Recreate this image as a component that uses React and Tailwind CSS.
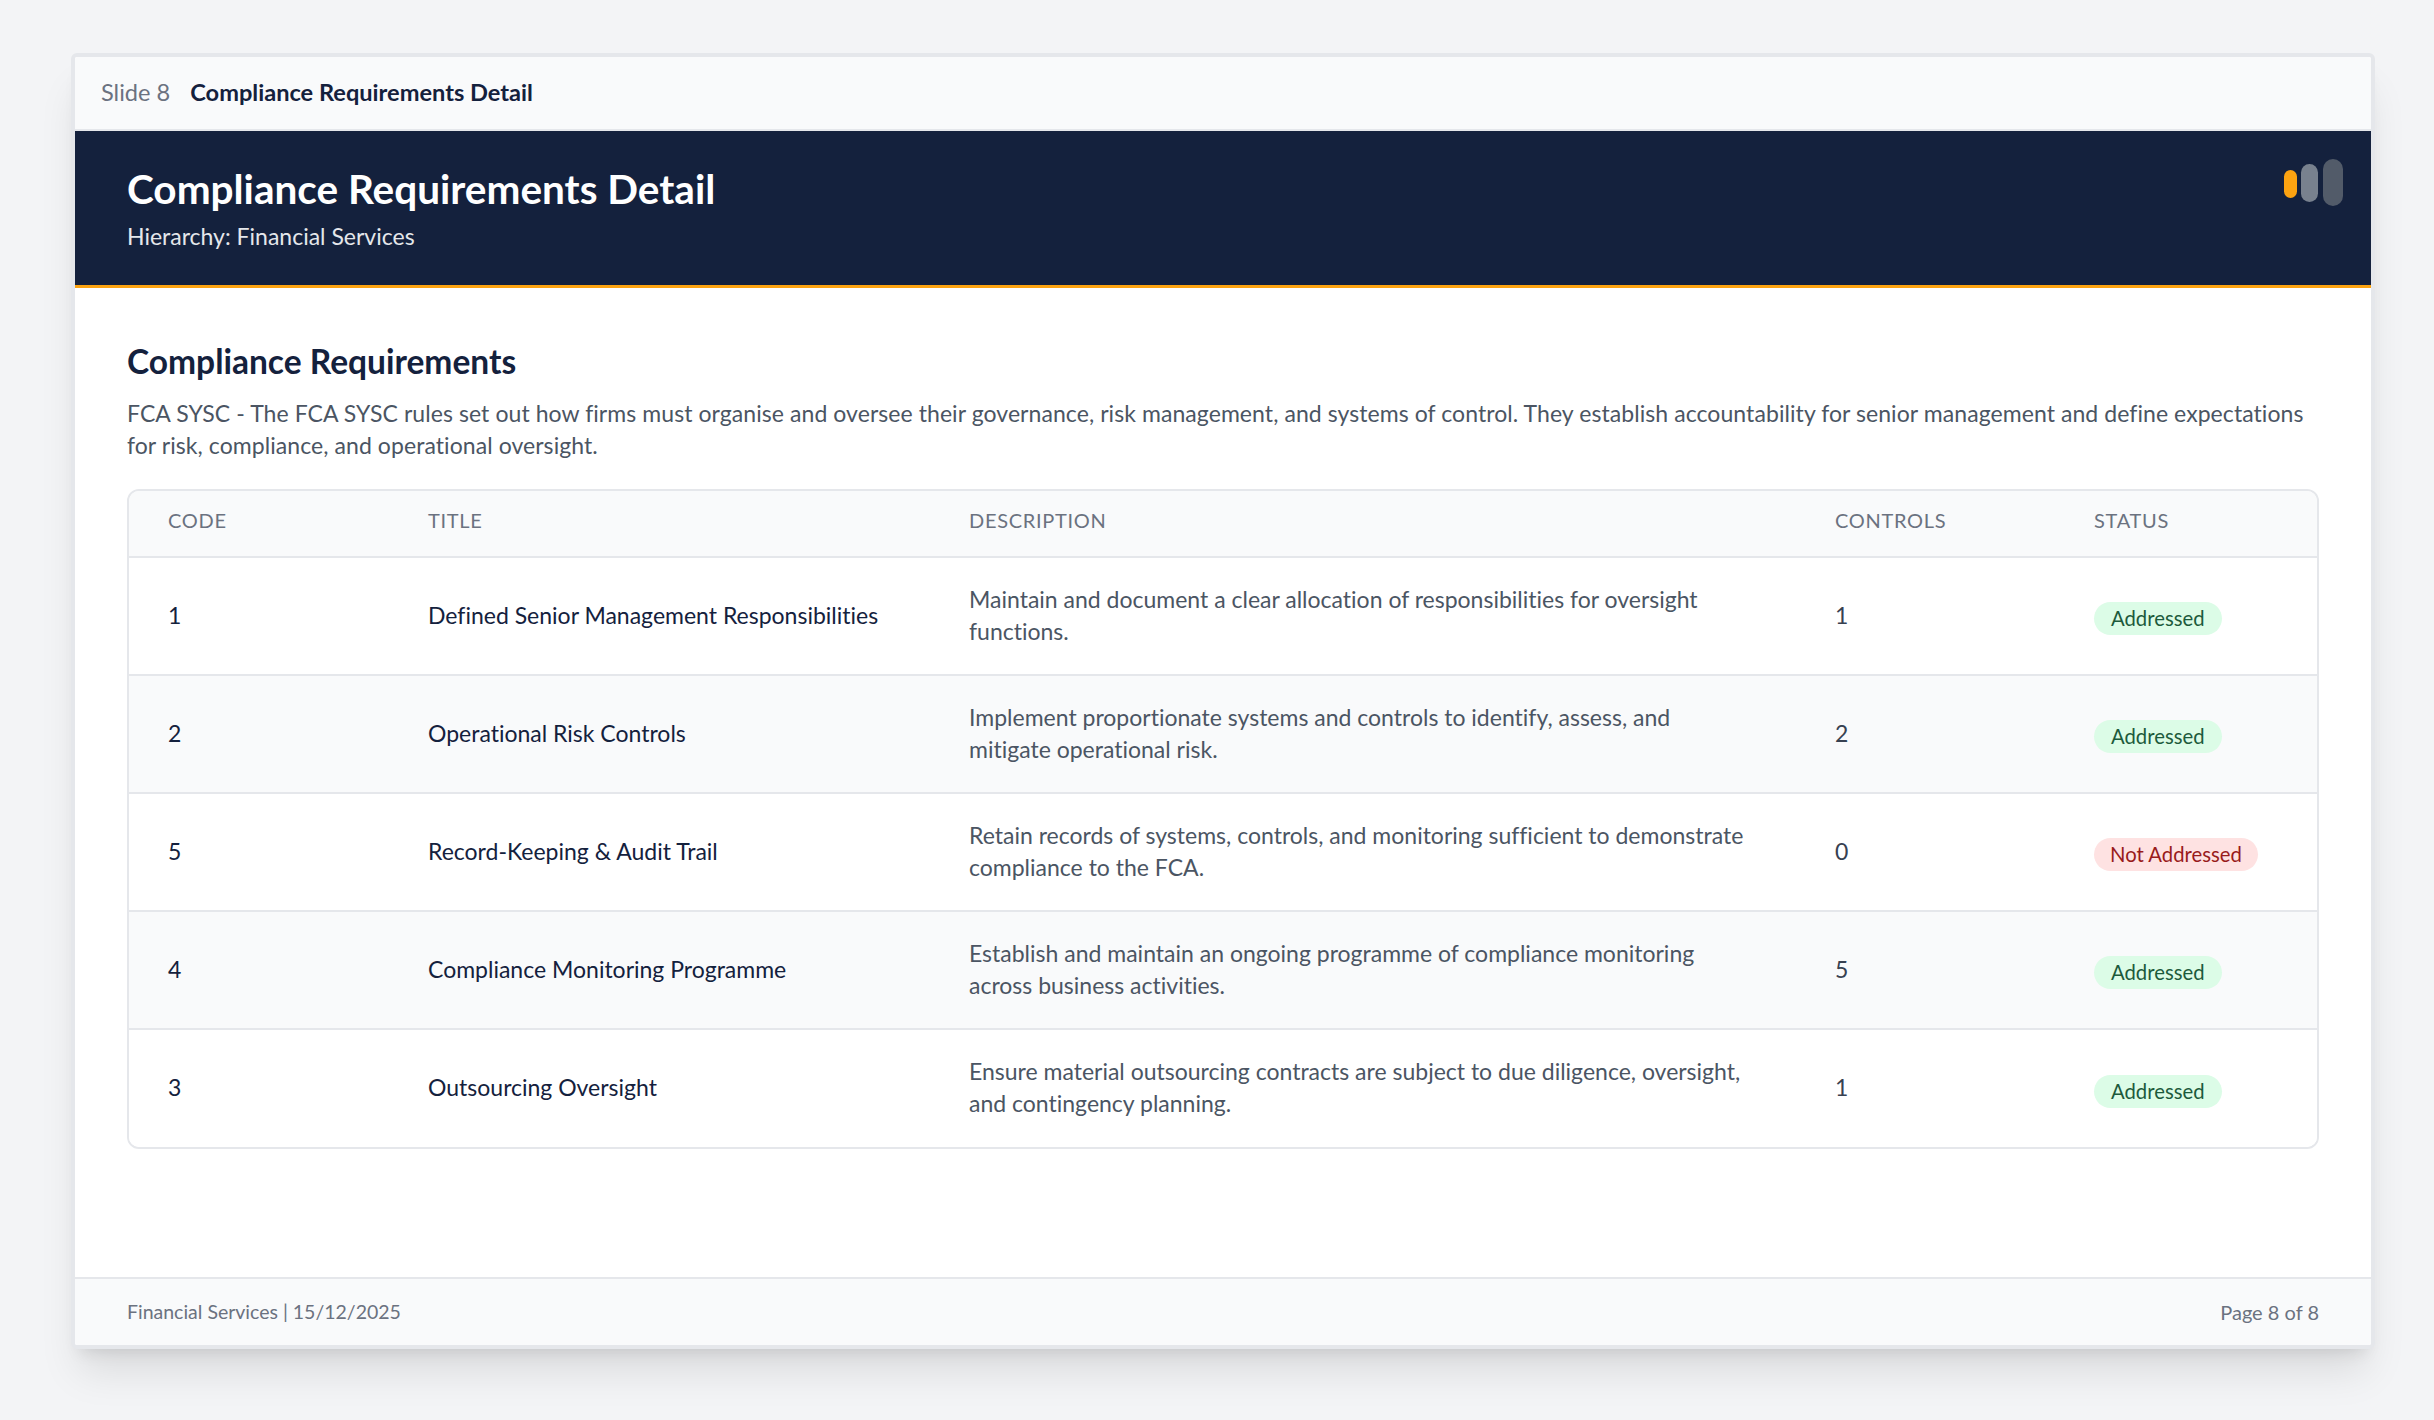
const rows = [
    { code: '1', title: 'Defined Senior Management Responsibilities', desc: 'Maintain and document a clear allocation of responsibilities for oversight functions.', controls: 1, ok: true },
    { code: '2', title: 'Operational Risk Controls', desc: 'Implement proportionate systems and controls to identify, assess, and mitigate operational risk.', controls: 2, ok: true },
    { code: '5', title: 'Record-Keeping & Audit Trail', desc: 'Retain records of systems, controls, and monitoring sufficient to demonstrate compliance to the FCA.', controls: 0, ok: false },
    { code: '4', title: 'Compliance Monitoring Programme', desc: 'Establish and maintain an ongoing programme of compliance monitoring across business activities.', controls: 5, ok: true },
    { code: '3', title: 'Outsourcing Oversight', desc: 'Ensure material outsourcing contracts are subject to due diligence, oversight, and contingency planning.', controls: 1, ok: true },
];

function Badge({ ok }) {
    return ok
        ? <span className="inline-block rounded-full bg-[#dcfce7] px-[17px] py-[3px] text-[20.3px] leading-[27px] text-[#1c5a3c]">Addressed</span>
        : <span className="inline-block rounded-full bg-[#fee2e2] px-[16px] py-[3px] text-[20.3px] leading-[27px] text-[#991b1b]">Not Addressed</span>;
}

export default function App() {
    return (
        <div className="min-h-[1420px] bg-[#f3f4f6] pl-[71px] pt-[53px] font-['Lato','Liberation_Sans',sans-serif] [font-variant-ligatures:none]">
            <div className="flex h-[1296px] w-[2304px] flex-col overflow-hidden rounded-[6px] border-4 border-[#e5e7eb] bg-white shadow-[0_30px_38px_-8px_rgba(0,0,0,0.1),0_12px_15px_-9px_rgba(0,0,0,0.1)]">
                <div className="flex h-[74px] shrink-0 items-center gap-[20px] border-b-2 border-[#e5e7eb] bg-[#f9fafb] px-[26px] text-[23.6px]">
                    <span className="text-[#6b7280]">Slide 8</span>
                    <span className="font-bold text-[#14213d]">Compliance Requirements Detail</span>
                </div>
                <header className="relative flex h-[157px] shrink-0 flex-col justify-center border-b-[3px] border-[#fca311] bg-[#14213d] px-[52px] text-white">
                    <h1 className="text-[40.5px] font-bold leading-[54px]">Compliance Requirements Detail</h1>
                    <p className="mt-[3px] pb-[1px] text-[23px] leading-[34px] text-[#e5e7eb]">Hierarchy: Financial Services</p>
                    <div className="absolute right-[28px] top-[28px] flex items-center gap-[4px]">
                        <div className="mt-[3px] h-[28px] w-[13px] rounded-full bg-[#fca311]" />
                        <div className="h-[38px] w-[17px] rounded-full bg-[#78818e]" />
                        <div className="ml-px h-[47px] w-[20px] rounded-full bg-[#525b69]" />
                    </div>
                </header>
                <main className="flex-1 px-[52px] pt-[52px]">
                    <h2 className="text-[33.5px] font-bold leading-[42px] text-[#14213d]">Compliance Requirements</h2>
                    <p className="mt-[15px] text-[23px] leading-[32px] tracking-[0.07px] text-[#4b5563]">FCA SYSC - The FCA SYSC rules set out how firms must organise and oversee their governance, risk management, and systems of control. They establish accountability for senior management and define expectations for risk, compliance, and operational oversight.</p>
                    <div className="mt-[28px] overflow-hidden rounded-[12px] border-2 border-[#e5e7eb]">
                        <table className="w-full table-fixed border-collapse text-left text-[23px]">
                            <thead>
                                <tr className="h-[66px] border-b-2 border-[#e5e7eb] bg-[#f9fafb] text-[20px] uppercase tracking-[0.7px] text-[#6b7280]">
                                    <th className="w-[259px] pb-[8px] pl-[39px] font-normal">Code</th>
                                    <th className="w-[541px] pb-[8px] pl-[40px] font-normal">Title</th>
                                    <th className="w-[866px] pb-[8px] pl-[40px] font-normal">Description</th>
                                    <th className="w-[259px] pb-[8px] pl-[40px] font-normal">Controls</th>
                                    <th className="pb-[8px] pl-[40px] font-normal">Status</th>
                                </tr>
                            </thead>
                            <tbody>
                                {rows.map((row, i) => (
                                    <tr key={row.code} className={`h-[118px] border-b-2 border-[#e5e7eb] last:border-b-0 ${i % 2 ? 'bg-[#f9fafb]' : 'bg-white'}`}>
                                        <td className="pb-[2px] pl-[39px] text-[#14213d]">{row.code}</td>
                                        <td className="pb-[2px] pl-[40px] text-[#14213d]">{row.title}</td>
                                        <td className="pb-[3px] pl-[40px] pr-[40px] leading-[32px] text-[#4b5563]">{row.desc}</td>
                                        <td className="pb-[2px] pl-[40px] text-[#374151]">{row.controls}</td>
                                        <td className="pl-[40px] pt-[3px]"><Badge ok={row.ok} /></td>
                                    </tr>
                                ))}
                            </tbody>
                        </table>
                    </div>
                </main>
                <footer className="flex h-[68px] shrink-0 items-center justify-between border-t-2 border-[#e5e7eb] bg-[#f9fafb] px-[52px] text-[19.5px] text-[#6b7280]">
                    <span>Financial Services | 15/12/2025</span>
                    <span className="text-[20px]">Page 8 of 8</span>
                </footer>
            </div>
        </div>
    );
}
